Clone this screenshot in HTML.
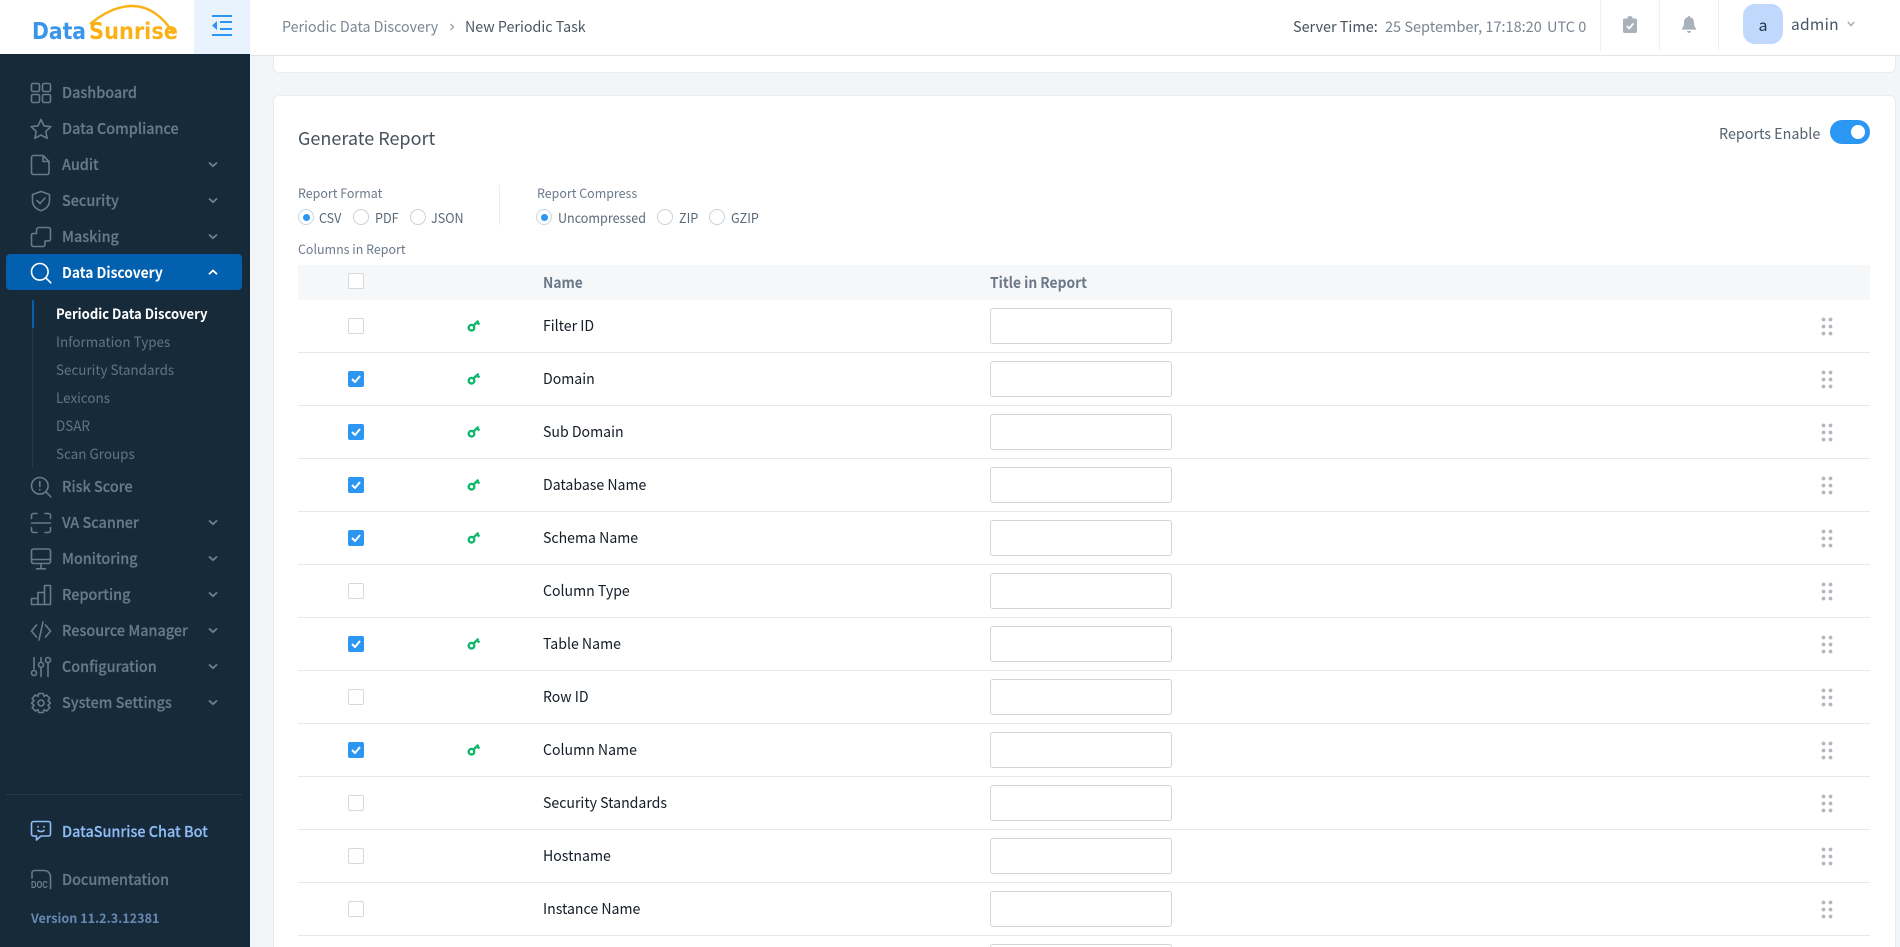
<!DOCTYPE html>
<html lang="en"><head><meta charset="utf-8"><title>DataSunrise</title>
<style>
*{box-sizing:border-box;margin:0;padding:0}
html,body{width:1900px;height:947px;overflow:hidden;background:#f3f6f8;font-family:"Noto Sans CJK JP","Liberation Sans",sans-serif}
#w{position:absolute;left:0;top:0;width:1900px;height:947px;overflow:hidden;background:#f3f6f8}
.a{position:absolute;white-space:nowrap}
.m{position:absolute;left:62px;font-size:15px;line-height:20px;font-weight:500;color:#667a8c;-webkit-text-stroke:.2px;white-space:nowrap;transform:scaleX(.96);transform-origin:0 50%}
.s{position:absolute;left:56px;font-size:14px;line-height:20px;color:#5f7485;white-space:nowrap;transform:scaleX(.96);transform-origin:0 50%}
.ic{position:absolute;left:30px;width:22px;height:22px;fill:none;stroke:#667a8c;stroke-width:1.6;stroke-linecap:round;stroke-linejoin:round}
.ch{position:absolute;left:208px;width:10px;height:7px;fill:none;stroke:#6f8192;stroke-width:1.8}
.r{position:absolute;left:298px;width:1572px;height:53px;border-bottom:1px solid #e6e8eb;background:#fff}
.cb{position:absolute;left:50px;top:18px;width:16px;height:16px;border:1px solid #d6d9dc;border-radius:2px;background:#fff}
.cb.on{background:#2c96f3;border-color:#2c96f3}
.cb.on svg{position:absolute;left:2px;top:3px;width:10px;height:8px;fill:none;stroke:#fff;stroke-width:2}
.k{position:absolute;left:169px;top:19px;width:14px;height:13px}
.n{position:absolute;left:245px;top:15px;font-size:15px;line-height:21px;color:#141c26;white-space:nowrap;transform:scaleX(.94);transform-origin:0 50%}
.in{position:absolute;left:692px;top:8px;width:182px;height:36px;border:1px solid #d2d4d7;border-radius:3px;background:#fff}
.d{position:absolute;left:1522px;top:16px;width:14px;height:21px;background:radial-gradient(circle,#b3b6c2 1.6px,rgba(179,182,194,0) 2.2px) 0 0/7px 7px}
.lb{position:absolute;font-size:13px;line-height:18px;color:#6b7a8a;white-space:nowrap;transform:scaleX(.957);transform-origin:0 50%}
.rd{position:absolute;top:209px;width:16px;height:16px;border:1px solid #ccd0d4;border-radius:50%;background:#fff}
.rd.on{border-color:#c4d6e8}
.rd.on:after{content:"";position:absolute;left:3.5px;top:3.5px;width:7px;height:7px;border-radius:50%;background:#2c96f3}
.rt{position:absolute;top:208px;font-size:13.5px;line-height:18px;color:#5a6978;white-space:nowrap;transform:scaleX(.93);transform-origin:0 50%}
.th{position:absolute;top:272px;font-size:15px;line-height:21px;font-weight:700;color:#6b7888;white-space:nowrap;transform:scaleX(.92);transform-origin:0 50%}
.hd{position:absolute;top:16px;font-size:15px;line-height:21px;white-space:nowrap;transform:scaleX(.95);transform-origin:0 50%}
</style></head><body>
<div id="w">
<svg width="0" height="0" style="position:absolute"><symbol id="key" viewBox="0 0 14 13"><circle cx="4.500" cy="8.700" r="2.800" fill="none" stroke="#0fb86c" stroke-width="2.400"/><path d="M6.500 6.500L11.500 1.800M10 3.300L12.400 5.500" fill="none" stroke="#0fb86c" stroke-width="2.400"/></symbol></svg>

<div class="a" style="left:273px;top:0;width:1623px;height:73px;background:#fff;border:1px solid #e9edf0;border-top:0;border-radius:0 0 6px 6px"></div>
<div class="a" style="left:273px;top:95px;width:1623px;height:852px;background:#fff;border:1px solid #e9edf0;border-bottom:0;border-radius:6px 6px 0 0"></div>

<!-- header -->
<div class="a" style="left:0;top:0;width:1900px;height:56px;background:#fff;border-bottom:1px solid #e2e4e6"></div>
<div class="a" style="left:194px;top:0;width:56px;height:54px;background:#e9f3fd"></div>
<svg class="a" style="left:210px;top:14px" width="24" height="24" viewBox="0 0 24 24" fill="none" stroke="#2c96f3" stroke-width="2"><path d="M2 2H22M10 8H22M10 15H22M2 21H22"/><path d="M7 7V16L2 11.500Z" fill="#2c96f3" stroke="none"/></svg>
<svg class="a" style="left:28px;top:2px" width="160" height="46" viewBox="0 0 160 46">
<path d="M62 22C78 9 92 4 104 4C122 4 136 16 146 32" fill="none" stroke="#fbb116" stroke-width="2.400"/>
<text x="4" y="37" font-family="DejaVu Sans" font-weight="700" font-size="23" fill="#3a96ea" textLength="54" lengthAdjust="spacingAndGlyphs">Data</text>
<text x="61" y="37" font-family="DejaVu Sans" font-weight="700" font-size="23" fill="#fbb116" textLength="89" lengthAdjust="spacingAndGlyphs">Sunrise</text>
</svg>
<div class="hd" style="left:282px;color:#7a8794">Periodic Data Discovery</div>
<svg class="a" style="left:449px;top:23px" width="6" height="8" viewBox="0 0 6 8" fill="none" stroke="#8a96a2" stroke-width="1.200"><path d="M1.500 1L4.500 4L1.500 7"/></svg>
<div class="hd" style="left:465px;color:#4a5866">New Periodic Task</div>
<div class="hd" style="left:1293px;color:#46525e;transform:scaleX(.96)">Server Time:</div>
<div class="a" style="left:1385px;top:16px;font-size:14.500px;line-height:21px;color:#7a8590">25 September, 17:18:20</div>
<div class="a" style="left:1547px;top:16px;font-size:14.500px;line-height:21px;color:#7a8590">UTC 0</div>
<div class="a" style="left:1600px;top:0;width:1px;height:52px;background:#eef0f2"></div>
<div class="a" style="left:1659px;top:0;width:1px;height:52px;background:#eef0f2"></div>
<div class="a" style="left:1718px;top:0;width:1px;height:50px;background:#eef0f2"></div>
<svg class="a" style="left:1623px;top:16px" width="14" height="17" viewBox="0 0 14 17"><path d="M1.500 2.500H4.500V1.500C4.500 .8 5 .3 5.700 .3H8.300C9 .3 9.500 .8 9.500 1.500V2.500H12.500C13.300 2.500 14 3.200 14 4V15.500C14 16.300 13.300 17 12.500 17H1.500C.7 17 0 16.300 0 15.500V4C0 3.200 .7 2.500 1.500 2.500Z" fill="#a9b1ba"/><path d="M3.800 10L6.200 12.400L10.400 7.400" fill="none" stroke="#fff" stroke-width="1.800"/></svg>
<svg class="a" style="left:1682px;top:16px" width="14" height="17" viewBox="0 0 14 17"><path d="M7 0C7.800 0 8.300 .6 8.300 1.300C10.800 1.900 12 4 12 6.500C12 10 13 11.300 14 12.400V13.600H0V12.400C1 11.300 2 10 2 6.500C2 4 3.200 1.900 5.700 1.300C5.700 .6 6.200 0 7 0Z" fill="#a9b1ba"/><path d="M5 15H9C8.800 16.300 8 17 7 17C6 17 5.200 16.300 5 15Z" fill="#a9b1ba"/></svg>
<div class="a" style="left:1743px;top:4px;width:40px;height:40px;border-radius:12px;background:#bfd8fb;text-align:center;font-size:16px;line-height:40px;color:#24384d">a</div>
<div class="a" style="left:1791px;top:13px;font-size:15.500px;line-height:22px;color:#465564;letter-spacing:.3px">admin</div>
<svg class="a" style="left:1847px;top:21px" width="8" height="6" viewBox="0 0 8 6" fill="none" stroke="#a5adb5" stroke-width="1.500"><path d="M.8 1L4 4.500L7.200 1"/></svg>

<!-- sidebar -->
<div class="a" style="left:0;top:54px;width:250px;height:893px;background:#172a3a"></div>
<div class="a" style="left:6px;top:254px;width:236px;height:36px;background:#0260ae;border-radius:4px"></div>
<div class="a" style="left:32px;top:300px;width:2px;height:28px;background:#0260ae"></div>
<div class="a" style="left:32px;top:328px;width:1px;height:140px;background:#24394a"></div>

<svg class="ic" style="top:82px" viewBox="0 0 22 22"><rect x="1.500" y="1.500" width="8" height="8" rx="1.500"/><rect x="12.500" y="1.500" width="8" height="8" rx="1.500"/><rect x="1.500" y="12.500" width="8" height="8" rx="1.500"/><rect x="12.500" y="12.500" width="8" height="8" rx="1.500"/></svg>
<div class="m" style="top:83px">Dashboard</div>
<svg class="ic" style="top:118px" viewBox="0 0 22 22"><path d="M11 1.500L14 7.800L20.800 8.700L15.800 13.400L17.100 20.300L11 17L4.900 20.300L6.200 13.400L1.200 8.700L8 7.800Z"/></svg>
<div class="m" style="top:119px">Data Compliance</div>
<svg class="ic" style="top:154px" viewBox="0 0 22 22"><path d="M3.500 1.500H13L19 7.500V18.500C19 19.600 18.100 20.500 17 20.500H3.500C2.400 20.500 1.500 19.600 1.500 18.500V3.500C1.500 2.400 2.400 1.500 3.500 1.500ZM13 1.500V7.500H19"/></svg>
<div class="m" style="top:155px">Audit</div>
<svg class="ch" style="top:161px" viewBox="0 0 10 7"><path d="M1 1.500L5 5.200L9 1.500"/></svg>
<svg class="ic" style="top:190px" viewBox="0 0 22 22"><path d="M11 1.500L19.500 4.500V10.500C19.500 15.500 16 19 11 20.800C6 19 2.500 15.500 2.500 10.500V4.500Z"/><path d="M7 10.500L10 13.500L15 8"/></svg>
<div class="m" style="top:191px">Security</div>
<svg class="ch" style="top:197px" viewBox="0 0 10 7"><path d="M1 1.500L5 5.200L9 1.500"/></svg>
<svg class="ic" style="top:226px" viewBox="0 0 22 22"><path d="M9 1.500H18.500C19.600 1.500 20.500 2.400 20.500 3.500V13C20.500 14.100 19.600 15 18.500 15H15V18.500C15 19.600 14.100 20.500 13 20.500H3.500C2.400 20.500 1.500 19.600 1.500 18.500V9C1.500 8 2 7.500 3 7.500H6.500V4C6.500 2.500 7.500 1.500 9 1.500Z"/></svg>
<div class="m" style="top:227px">Masking</div>
<svg class="ch" style="top:233px" viewBox="0 0 10 7"><path d="M1 1.500L5 5.200L9 1.500"/></svg>
<svg class="ic" style="top:262px;stroke:#fff" viewBox="0 0 22 22"><circle cx="9.800" cy="9.800" r="8.300"/><path d="M15.800 15.800L20.800 20.800"/></svg>
<div class="m" style="top:263px;color:#fff;font-weight:700;transform:scaleX(.92);-webkit-text-stroke:0">Data Discovery</div>
<svg class="ch" style="top:269px;stroke:#fff" viewBox="0 0 10 7"><path d="M1 5.200L5 1.500L9 5.200"/></svg>

<div class="s" style="top:304px;color:#fff;font-weight:700;transform:scaleX(.933)">Periodic Data Discovery</div>
<div class="s" style="top:332px">Information Types</div>
<div class="s" style="top:360px">Security Standards</div>
<div class="s" style="top:388px">Lexicons</div>
<div class="s" style="top:416px">DSAR</div>
<div class="s" style="top:444px">Scan Groups</div>

<svg class="ic" style="top:476px" viewBox="0 0 22 22"><circle cx="9.800" cy="9.800" r="8.300"/><path d="M15.800 15.800L20.800 20.800M9.800 5.500V10.500M9.800 13.500V14"/></svg>
<div class="m" style="top:477px">Risk Score</div>
<svg class="ic" style="top:512px" viewBox="0 0 22 22"><path d="M1.500 6.500V3.500C1.500 2.400 2.400 1.500 3.500 1.500H7M15 1.500H18.500C19.600 1.500 20.500 2.400 20.500 3.500V6.500M1.500 11H20.500M1.500 15.500V18.500C1.500 19.600 2.400 20.500 3.500 20.500H7M15 20.500H18.500C19.600 20.500 20.500 19.600 20.500 18.500V15.500"/></svg>
<div class="m" style="top:513px">VA Scanner</div>
<svg class="ch" style="top:519px" viewBox="0 0 10 7"><path d="M1 1.500L5 5.200L9 1.500"/></svg>
<svg class="ic" style="top:548px" viewBox="0 0 22 22"><rect x="1.500" y="1" width="19" height="14.500" rx="2"/><path d="M1.500 11.500H20.500M11 15.500V20.500M6.500 20.800H15.500"/></svg>
<div class="m" style="top:549px">Monitoring</div>
<svg class="ch" style="top:555px" viewBox="0 0 10 7"><path d="M1 1.500L5 5.200L9 1.500"/></svg>
<svg class="ic" style="top:584px" viewBox="0 0 22 22"><path d="M1.500 20.500V14.500H8M8 20.500V8.500H14.500M1.500 20.500H20.500V1.500H14.500V20.500M8 8.500V20.500"/></svg>
<div class="m" style="top:585px">Reporting</div>
<svg class="ch" style="top:591px" viewBox="0 0 10 7"><path d="M1 1.500L5 5.200L9 1.500"/></svg>
<svg class="ic" style="top:620px" viewBox="0 0 22 22"><path d="M6.500 5L1.500 11L6.500 17M15.500 5L20.500 11L15.500 17M13 2L9 20"/></svg>
<div class="m" style="top:621px">Resource Manager</div>
<svg class="ch" style="top:627px" viewBox="0 0 10 7"><path d="M1 1.500L5 5.200L9 1.500"/></svg>
<svg class="ic" style="top:656px" viewBox="0 0 22 22"><path d="M4 1.500V13M11 1.500V6M11 11.500V20.500M18 7V20.500"/><circle cx="4" cy="17" r="2.500"/><circle cx="11" cy="8.800" r="2.500"/><circle cx="18" cy="4" r="2.500"/></svg>
<div class="m" style="top:657px">Configuration</div>
<svg class="ch" style="top:663px" viewBox="0 0 10 7"><path d="M1 1.500L5 5.200L9 1.500"/></svg>
<svg class="ic" style="top:692px" viewBox="0 0 22 22"><circle cx="11" cy="11" r="3"/><path d="M8.800 1.500H13.200L14 4.300L16.700 3L19.800 6.500L18 8.800L20.500 11L18 13.200L19.800 15.500L16.700 19L14 17.700L13.200 20.500H8.800L8 17.700L5.300 19L2.200 15.500L4 13.200L1.500 11L4 8.800L2.200 6.500L5.300 3L8 4.300Z"/></svg>
<div class="m" style="top:693px">System Settings</div>
<svg class="ch" style="top:699px" viewBox="0 0 10 7"><path d="M1 1.500L5 5.200L9 1.500"/></svg>

<div class="a" style="left:6px;top:794px;width:236px;height:1px;background:#24394a"></div>
<svg class="ic" style="top:820px;stroke:#8fbcf4" viewBox="0 0 22 22"><path d="M3.500 1.500H18.500C19.600 1.500 20.500 2.400 20.500 3.500V14C20.500 15.100 19.600 16 18.500 16H11L6.500 20V16H3.500C2.400 16 1.500 15.100 1.500 14V3.500C1.500 2.400 2.400 1.500 3.500 1.500Z"/><path d="M8 6.500V7M14 6.500V7M8 10.500C9.500 12 12.500 12 14 10.500"/></svg>
<div class="m" style="top:822px;color:#8fbcf4">DataSunrise Chat Bot</div>
<svg class="ic" style="top:868px" viewBox="0 0 22 22"><path d="M2 10V5C2 3.500 3 2.500 4.500 2.500H14C17.500 2.500 20.500 5 20.500 9V20.500"/></svg>
<div class="a" style="left:31px;top:881px;font-family:'Liberation Sans',sans-serif;font-size:10.500px;font-weight:700;line-height:9px;color:#6c8092;letter-spacing:0;transform:scaleX(.72);transform-origin:0 50%">DOC</div>
<div class="m" style="top:870px">Documentation</div>
<div class="a" style="left:31px;top:908px;font-size:13px;line-height:19px;font-weight:700;color:#6688b0;transform:scaleX(.97);transform-origin:0 50%">Version 11.2.3.12381</div>

<!-- content -->
<div class="a" style="left:298px;top:125px;font-size:18px;line-height:26px;color:#46525e">Generate Report</div>
<div class="a" style="left:1719px;top:123px;font-size:15px;line-height:21px;color:#55626f;transform:scaleX(.955);transform-origin:0 50%">Reports Enable</div>
<div class="a" style="left:1830px;top:120px;width:40px;height:24px;border-radius:12px;background:#2c96f3"></div>
<div class="a" style="left:1851px;top:125px;width:14px;height:14px;border-radius:50%;background:#fff"></div>

<div class="lb" style="left:298px;top:184px">Report Format</div>
<div class="rd on" style="left:298px"></div><div class="rt" style="left:319px">CSV</div>
<div class="rd" style="left:353px"></div><div class="rt" style="left:375px">PDF</div>
<div class="rd" style="left:410px"></div><div class="rt" style="left:431px">JSON</div>
<div class="a" style="left:499px;top:185px;width:1px;height:40px;background:#eceef0"></div>
<div class="lb" style="left:537px;top:184px">Report Compress</div>
<div class="rd on" style="left:536px"></div><div class="rt" style="left:558px">Uncompressed</div>
<div class="rd" style="left:657px"></div><div class="rt" style="left:679px">ZIP</div>
<div class="rd" style="left:709px"></div><div class="rt" style="left:731px">GZIP</div>
<div class="lb" style="left:298px;top:240px">Columns in Report</div>

<div class="a" style="left:298px;top:265px;width:1572px;height:35px;background:#f5f7f9"></div>
<div class="cb a" style="left:348px;top:273px"></div>
<div class="th" style="left:543px">Name</div>
<div class="th" style="left:990px">Title in Report</div>

<div class="r" style="top:300px"><div class="cb"></div><svg class="k"><use href="#key"/></svg><div class="n">Filter ID</div><div class="in"></div><div class="d"></div></div>
<div class="r" style="top:353px"><div class="cb on"><svg viewBox="0 0 10 8"><path d="M1 4L4 7L9 1"/></svg></div><svg class="k"><use href="#key"/></svg><div class="n">Domain</div><div class="in"></div><div class="d"></div></div>
<div class="r" style="top:406px"><div class="cb on"><svg viewBox="0 0 10 8"><path d="M1 4L4 7L9 1"/></svg></div><svg class="k"><use href="#key"/></svg><div class="n">Sub Domain</div><div class="in"></div><div class="d"></div></div>
<div class="r" style="top:459px"><div class="cb on"><svg viewBox="0 0 10 8"><path d="M1 4L4 7L9 1"/></svg></div><svg class="k"><use href="#key"/></svg><div class="n">Database Name</div><div class="in"></div><div class="d"></div></div>
<div class="r" style="top:512px"><div class="cb on"><svg viewBox="0 0 10 8"><path d="M1 4L4 7L9 1"/></svg></div><svg class="k"><use href="#key"/></svg><div class="n">Schema Name</div><div class="in"></div><div class="d"></div></div>
<div class="r" style="top:565px"><div class="cb"></div><div class="n">Column Type</div><div class="in"></div><div class="d"></div></div>
<div class="r" style="top:618px"><div class="cb on"><svg viewBox="0 0 10 8"><path d="M1 4L4 7L9 1"/></svg></div><svg class="k"><use href="#key"/></svg><div class="n">Table Name</div><div class="in"></div><div class="d"></div></div>
<div class="r" style="top:671px"><div class="cb"></div><div class="n">Row ID</div><div class="in"></div><div class="d"></div></div>
<div class="r" style="top:724px"><div class="cb on"><svg viewBox="0 0 10 8"><path d="M1 4L4 7L9 1"/></svg></div><svg class="k"><use href="#key"/></svg><div class="n">Column Name</div><div class="in"></div><div class="d"></div></div>
<div class="r" style="top:777px"><div class="cb"></div><div class="n">Security Standards</div><div class="in"></div><div class="d"></div></div>
<div class="r" style="top:830px"><div class="cb"></div><div class="n">Hostname</div><div class="in"></div><div class="d"></div></div>
<div class="r" style="top:883px"><div class="cb"></div><div class="n">Instance Name</div><div class="in"></div><div class="d"></div></div>

<div class="a" style="left:990px;top:944px;width:182px;height:3px;border:1px solid #d2d4d7;border-bottom:0;border-radius:3px 3px 0 0;background:#fff"></div>
</div>
</body></html>
